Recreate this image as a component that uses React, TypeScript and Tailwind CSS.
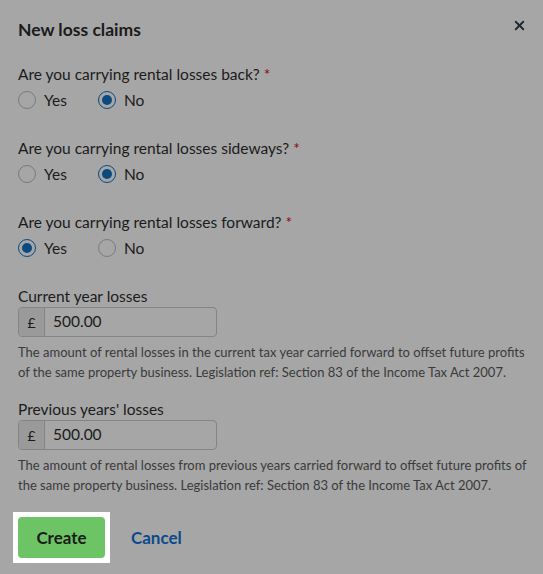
import { useState } from 'react';
import { X } from 'lucide-react';

type YesNo = 'yes' | 'no';

const QUESTIONS: { id: string; label: string; initial: YesNo }[] = [
  { id: 'back', label: 'Are you carrying rental losses back?', initial: 'no' },
  { id: 'sideways', label: 'Are you carrying rental losses sideways?', initial: 'no' },
  { id: 'forward', label: 'Are you carrying rental losses forward?', initial: 'yes' },
];

const AMOUNTS = [
  {
    id: 'current',
    label: 'Current year losses',
    value: '500.00',
    hint: 'The amount of rental losses in the current tax year carried forward to offset future profits of the same property business. Legislation ref: Section 83 of the Income Tax Act 2007.',
  },
  {
    id: 'previous',
    label: "Previous years' losses",
    value: '500.00',
    hint: 'The amount of rental losses from previous years carried forward to offset future profits of the same property business. Legislation ref: Section 83 of the Income Tax Act 2007.',
  },
];

function Radio({ checked, label, onClick }: { checked: boolean; label: string; onClick: () => void }) {
  return (
    <button type="button" onClick={onClick} className="flex items-center gap-[8px] text-left">
      <span
        className={
          checked
            ? 'flex size-[18px] items-center justify-center rounded-full border-[1.5px] border-[#0b4a7e]'
            : 'flex size-[18px] items-center justify-center rounded-full border border-[#7a7a7a]'
        }
      >
        {checked && <span className="size-[10px] rounded-full bg-[#0b4a7e]" />}
      </span>
      <span className="text-[15.5px] leading-[20px] text-[#1b1b1b]">{label}</span>
    </button>
  );
}

export default function App() {
  const [answers, setAnswers] = useState<Record<string, YesNo>>(
    Object.fromEntries(QUESTIONS.map((q) => [q.id, q.initial])),
  );
  const [values, setValues] = useState<Record<string, string>>(
    Object.fromEntries(AMOUNTS.map((a) => [a.id, a.value])),
  );

  return (
    <div
      className="h-[574px] w-[543px] overflow-hidden bg-[#a6a6a6] text-[#1b1b1b]"
      style={{ fontFamily: 'Lato, "Noto Sans", sans-serif' }}
    >
      <div className="flex items-center justify-between pl-[18px] pr-[16px] pt-[19px]">
        <h2 className="text-[17.5px] font-bold leading-[22px]">New loss claims</h2>
        <button type="button" aria-label="Close" className="mt-[-10px] text-[#1f2933]">
          <X className="size-[15px]" strokeWidth={3} />
        </button>
      </div>

      <div className="pl-[18px] pr-[12px] pt-[23px]">
        {QUESTIONS.map((q) => (
          <div key={q.id} className="mb-[28px]">
            <p className="text-[15.5px] leading-[20px]">
              {q.label} <span className="text-[#8a0d0d]">*</span>
            </p>
            <div className="mt-[6px] flex gap-[31px]">
              <Radio checked={answers[q.id] === 'yes'} label="Yes" onClick={() => setAnswers((a) => ({ ...a, [q.id]: 'yes' }))} />
              <Radio checked={answers[q.id] === 'no'} label="No" onClick={() => setAnswers((a) => ({ ...a, [q.id]: 'no' }))} />
            </div>
          </div>
        ))}

        {AMOUNTS.map((a) => (
          <div key={a.id} className="mb-[17px]">
            <label htmlFor={a.id} className="block text-[15.5px] leading-[20px]">
              {a.label}
            </label>
            <div className="mt-[1px] flex h-[30px] w-[199px] overflow-hidden rounded-[4px] border border-[#848484]">
              <span className="flex w-[26px] items-center justify-center border-r border-[#848484] bg-[#9a9a9a] text-[14px]">
                £
              </span>
              <input
                id={a.id}
                value={values[a.id]}
                onChange={(e) => setValues((v) => ({ ...v, [a.id]: e.target.value }))}
                className="min-w-0 flex-1 bg-transparent px-[8px] text-[15.5px] outline-none"
              />
            </div>
            <p className="mt-[5px] text-[13px] leading-[20px] text-[#3a3a3a]">{a.hint}</p>
          </div>
        ))}

        <div className="mt-[16px] flex items-center gap-[21px]">
          <div className="-ml-[5px] bg-white p-[5px]">
            <button
              type="button"
              className="block h-[41px] w-[87px] rounded-[4px] bg-[#6cc465] text-[17px] font-bold text-[#1b1b1b]"
            >
              Create
            </button>
          </div>
          <button type="button" className="text-[17px] font-bold text-[#0b4a8a]">
            Cancel
          </button>
        </div>
      </div>
    </div>
  );
}
